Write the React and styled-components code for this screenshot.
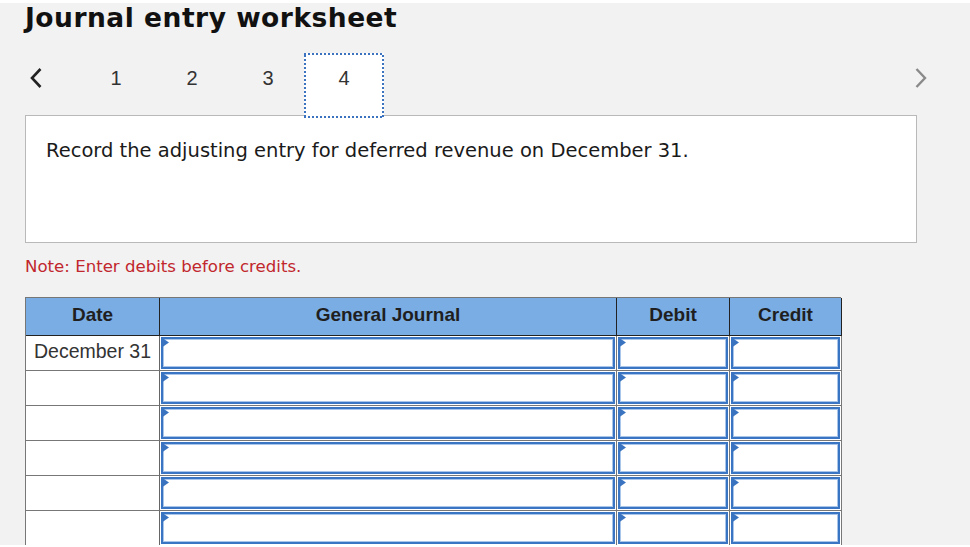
import styled, { createGlobalStyle } from "styled-components";

const GlobalStyle = createGlobalStyle`
  html, body {
    margin: 0;
    padding: 0;
    background: #ffffff;
  }
  * {
    box-sizing: border-box;
  }
`;

const Page = styled.div`
  margin-top: 3px;
  height: 542px;
  overflow: hidden;
  background: #f2f2f2;
  padding-left: 25px;
  font-family: "DejaVu Sans", Verdana, sans-serif;
`;

const Title = styled.h1`
  margin: 0;
  height: 30px;
  font-size: 26.5px;
  line-height: 30px;
  font-weight: 700;
  letter-spacing: 0.5px;
  color: #111;
`;

const Nav = styled.div`
  display: flex;
  align-items: flex-start;
  height: 82px;
  padding-top: 20px;
  width: 903px;
`;

const Chevron = styled.button`
  flex: none;
  background: none;
  border: none;
  padding: 0;
  margin-top: 14px;
  width: ${(p) => p.$w}px;
  display: flex;
  justify-content: ${(p) => (p.$right ? "flex-end" : "flex-start")};
  padding-left: ${(p) => (p.$right ? 0 : 4)}px;
  cursor: pointer;
  margin-left: ${(p) => (p.$right ? "auto" : 0)};
`;

const dots = "#3b73c0";

const Tab = styled.button`
  flex: none;
  position: relative;
  z-index: 1;
  width: ${(p) => (p.$active ? 80 : 76)}px;
  margin: 0 ${(p) => (p.$active ? -2 : 0)}px -3px;
  height: 65px;
  padding: 14px 0 0;
  border: none;
  background-color: ${(p) => (p.$active ? "#ffffff" : "transparent")};
  background-image: ${(p) =>
    p.$active
      ? `linear-gradient(90deg, ${dots} 50%, transparent 50%),
         linear-gradient(90deg, ${dots} 50%, transparent 50%),
         linear-gradient(0deg, ${dots} 50%, transparent 50%),
         linear-gradient(0deg, ${dots} 50%, transparent 50%)`
      : "none"};
  background-size: 4px 2px, 4px 2px, 2px 4px, 2px 4px;
  background-position: top left, bottom left, top left, top right;
  background-repeat: repeat-x, repeat-x, repeat-y, repeat-y;
  font-family: "Liberation Sans", Arial, sans-serif;
  font-size: 20px;
  line-height: 23px;
  color: #333;
  display: flex;
  justify-content: center;
  align-items: flex-start;
  cursor: pointer;
`;

const Prompt = styled.div`
  width: 892px;
  height: 128px;
  background: #ffffff;
  border: 1px solid #b9b9b9;
  padding: 23px 20px;
  font-size: 19.5px;
  color: #1a1a1a;
`;

const Note = styled.p`
  margin: 14px 0 0;
  font-size: 16.6px;
  color: #c1272d;
  height: 40px;
`;

const Table = styled.div`
  display: grid;
  grid-template-columns: 134px 457px 113px 112px;
  width: 816px;
  border-left: 1px solid #777;
  border-top: 1px solid #777;
  font-family: "Liberation Sans", Arial, sans-serif;
`;

const HeadCell = styled.div`
  height: 38px;
  padding-bottom: 4px;
  background: #79ade4;
  border-right: 1px solid #222;
  border-bottom: 1px solid #222;
  display: flex;
  align-items: center;
  justify-content: center;
  font-size: 19px;
  font-weight: 700;
  color: #1f1f1f;
`;

const DateCell = styled.div`
  height: 35px;
  padding-bottom: 3px;
  background: #ffffff;
  border-right: 1px solid #666;
  border-bottom: 1px solid #777;
  display: flex;
  align-items: center;
  justify-content: center;
  font-size: 19.5px;
  color: #333;
`;

const EntryCell = styled.div`
  position: relative;
  height: 35px;
  padding: 1px;
  background: #ffffff;
  border-right: 1px solid #777;
  border-bottom: 1px solid #777;
`;

const Flag = styled.svg`
  position: absolute;
  z-index: 2;
  top: 1px;
  left: 1px;
  display: block;
`;

const Input = styled.input`
  display: block;
  width: 100%;
  height: 100%;
  margin: 0;
  border: 2px solid #3a75c3;
  box-shadow: inset 0 0 0 1px #a9c6ea;
  background: #ffffff;
  outline: none;
  font: inherit;
  padding: 0 8px;
`;

const rows = ["December 31", "", "", "", "", ""];

const ChevronLeft = () => (
  <svg width="14" height="22" viewBox="0 0 14 22">
    <path d="M11.5 2 L3 11 L11.5 20" fill="none" stroke="#222" strokeWidth="2.6" />
  </svg>
);

const ChevronRight = () => (
  <svg width="14" height="22" viewBox="0 0 14 22">
    <path d="M2.5 2 L11 11 L2.5 20" fill="none" stroke="#8a8a8a" strokeWidth="2.4" />
  </svg>
);

const Entry = () => (
  <EntryCell>
    <Flag width="8" height="12" viewBox="0 0 8 12">
      <polygon points="0,0 8,5.5 0,11" fill="#3a74c0" />
    </Flag>
    <Input />
  </EntryCell>
);

export default function App() {
  return (
    <>
      <GlobalStyle />
      <Page>
        <Title>Journal entry worksheet</Title>
        <Nav>
          <Chevron $w={53} aria-label="Previous">
            <ChevronLeft />
          </Chevron>
          {[1, 2, 3, 4].map((n) => (
            <Tab key={n} $active={n === 4}>
              {n}
            </Tab>
          ))}
          <Chevron $w={20} $right aria-label="Next">
            <ChevronRight />
          </Chevron>
        </Nav>
        <Prompt>Record the adjusting entry for deferred revenue on December 31.</Prompt>
        <Note>Note: Enter debits before credits.</Note>
        <Table>
          <HeadCell>Date</HeadCell>
          <HeadCell>General Journal</HeadCell>
          <HeadCell>Debit</HeadCell>
          <HeadCell>Credit</HeadCell>
          {rows.map((date, i) => [
            <DateCell key={`d${i}`}>{date}</DateCell>,
            <Entry key={`g${i}`} />,
            <Entry key={`db${i}`} />,
            <Entry key={`c${i}`} />,
          ])}
        </Table>
      </Page>
    </>
  );
}
